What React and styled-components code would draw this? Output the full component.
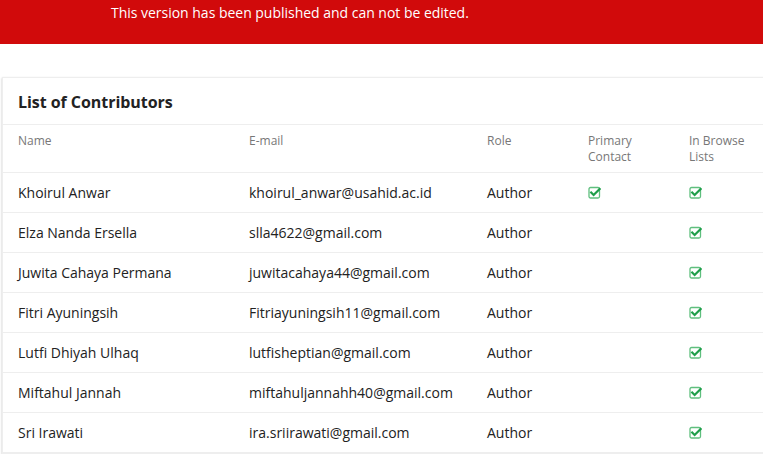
import React from "react";
import styled, { createGlobalStyle } from "styled-components";

const GlobalStyle = createGlobalStyle`
  html, body {
    margin: 0;
    padding: 0;
    background: #ffffff;
    font-family: "Open Sans", "Noto Sans", sans-serif;
    color: #222;
  }
`;

const contributors = [
  { name: "Khoirul Anwar", email: "khoirul_anwar@usahid.ac.id", role: "Author", primary: true, browse: true },
  { name: "Elza Nanda Ersella", email: "slla4622@gmail.com", role: "Author", primary: false, browse: true },
  { name: "Juwita Cahaya Permana", email: "juwitacahaya44@gmail.com", role: "Author", primary: false, browse: true },
  { name: "Fitri Ayuningsih", email: "Fitriayuningsih11@gmail.com", role: "Author", primary: false, browse: true },
  { name: "Lutfi Dhiyah Ulhaq", email: "lutfisheptian@gmail.com", role: "Author", primary: false, browse: true },
  { name: "Miftahul Jannah", email: "miftahuljannahh40@gmail.com", role: "Author", primary: false, browse: true },
  { name: "Sri Irawati", email: "ira.sriirawati@gmail.com", role: "Author", primary: false, browse: true },
];

const CheckIcon = () => (
  <svg width="13" height="13" viewBox="0 0 13 13">
    <rect x="1" y="1.5" width="10.5" height="10.5" rx="1.5" fill="none" stroke="#5fbf7e" strokeWidth="1.3" />
    <path d="M3.2 6.6 L5.6 9 L11.6 3" fill="none" stroke="#1f9e4a" strokeWidth="2.2" strokeLinecap="square" />
  </svg>
);

const App = () => {
  return (
    <Page>
      <GlobalStyle />
      <Banner>This version has been published and can not be edited.</Banner>
      <Card>
        <Title>List of Contributors</Title>
        <Table>
          <thead>
            <tr>
              <HeadCell width={231}>Name</HeadCell>
              <HeadCell width={238}>E-mail</HeadCell>
              <HeadCell width={101}>Role</HeadCell>
              <HeadCell width={101}>Primary<br />Contact</HeadCell>
              <HeadCell>In Browse<br />Lists</HeadCell>
            </tr>
          </thead>
          <tbody>
            {contributors.map((c) => (
              <tr key={c.email}>
                <Cell>{c.name}</Cell>
                <Cell>{c.email}</Cell>
                <Cell>{c.role}</Cell>
                <Cell>{c.primary && <CheckIcon />}</Cell>
                <Cell>{c.browse && <CheckIcon />}</Cell>
              </tr>
            ))}
          </tbody>
        </Table>
      </Card>
    </Page>
  );
};

const Page = styled.div`
  width: 763px;
  height: 454px;
  overflow: hidden;
`;

const Banner = styled.div`
  background: #d10a0b;
  color: #ffffff;
  height: 44px;
  box-sizing: border-box;
  padding: 4px 0 0 111px;
  font-size: 14px;
  letter-spacing: -0.02px;
  line-height: 18px;
`;

const Card = styled.div`
  margin: 33px -20px 0 2px;
  border: 1px solid #eeeeee;
  border-right: none;
  box-shadow: 0 1px 2px rgba(0, 0, 0, 0.25);
  background: #fff;
`;

const Title = styled.h2`
  margin: 0;
  padding: 13px 15px 0;
  height: 47px;
  box-sizing: border-box;
  font-size: 16px;
  font-weight: 700;
  letter-spacing: -0.05px;
  color: #222;
  border-bottom: 1px solid #eeeeee;
`;

const Table = styled.table`
  border-collapse: collapse;
  width: 100%;
  table-layout: fixed;
`;

const HeadCell = styled.th`
  width: ${({ width }) => (width ? `${width}px` : "auto")};
  text-align: left;
  vertical-align: top;
  font-weight: 400;
  font-size: 12px;
  line-height: 16px;
  color: #777777;
  padding: 8px 0 0 15px;
  height: 47px;
  box-sizing: border-box;
  border-bottom: 1px solid #eeeeee;
`;

const Cell = styled.td`
  font-size: 14px;
  color: #222;
  padding: 0 0 0 15px;
  height: 40px;
  box-sizing: border-box;
  border-bottom: 1px solid #eeeeee;
  vertical-align: middle;
  svg {
    display: block;
  }
`;

export default App;
